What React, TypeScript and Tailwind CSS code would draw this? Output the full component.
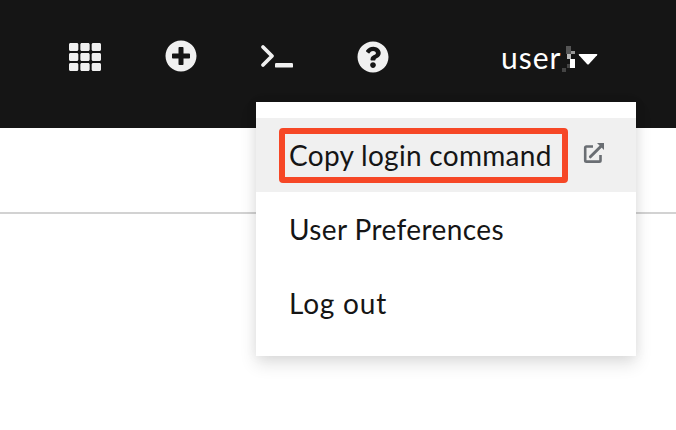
import React from "react";
import { FaTh, FaPlusCircle, FaQuestionCircle } from "react-icons/fa";

function TerminalIcon() {
  return (
    <svg width="34" height="26" viewBox="0 0 34 26" fill="none" stroke="#f0f0f0" strokeLinecap="round">
      <path d="M3 3 12 12 3 21" strokeWidth="3.8" strokeLinejoin="round" />
      <rect x="15" y="19" width="18" height="4.6" rx="1.2" fill="#f0f0f0" stroke="none" />
    </svg>
  );
}

function ExternalLinkIcon() {
  return (
    <svg width="22" height="22" viewBox="0 0 22 22" fill="none" stroke="#6a6e73">
      <path d="M10 4.5H3.4Q2.2 4.5 2.2 5.7V18.4Q2.2 19.6 3.4 19.6H16.3Q17.5 19.6 17.5 18.4V13" strokeWidth="2.6" />
      <path d="M7.4 14.8 18 4.2" strokeWidth="3" strokeLinecap="round" />
      <path d="M14 1H21V8Z" fill="#6a6e73" stroke="none" />
    </svg>
  );
}

export default function App() {
  return (
    <div className="relative h-[430px] w-[676px] overflow-hidden bg-white font-['Lato',sans-serif] text-[28px] leading-[42px] text-[#151515]">
      <header className="flex h-32 items-start bg-[#151515] pt-[35px] text-[#f0f0f0]">
        <FaTh className="mt-[6px] ml-[69px] size-8 shrink-0" />
        <FaPlusCircle className="mt-[5px] ml-16 size-8 shrink-0" />
        <div className="mt-[9px] ml-[63px] shrink-0"><TerminalIcon /></div>
        <FaQuestionCircle className="mt-[6px] ml-[63px] size-8 shrink-0" />
        <div className="ml-[112px] flex items-start text-white">
          <span className="mt-px w-[61px] text-[30px] tracking-[1px]">user</span>
          <svg width="38" height="28" viewBox="562 46 38 28" shapeRendering="crispEdges" className="mt-[11px] shrink-0">
            <path d="M566 46h5v8h-5z" fill="#555" />
            <path d="M571 51h4v3h-4z" fill="#999" />
            <path d="M567 54h4v5h-4z" fill="#bbb" />
            <path d="M570 59h5v9h-5z" fill="#fff" />
            <path d="M567 64h3v4h-3zM562 68h4v4h-4z" fill="#444" />
            <path d="M579.5 54h17q1.5 0 .5 1.2l-8 8.8q-1 1-2 0l-8-8.8q-1-1.2.5-1.2z" fill="#fff" shapeRendering="auto" />
          </svg>
        </div>
      </header>
      <div className="h-[86px] border-b-2 border-[#d2d2d2]" />
      <nav className="absolute top-[102px] left-[256px] h-[254px] w-[380px] bg-white pt-4 shadow-[0_8px_16px_rgba(3,3,3,0.12),0_0_12px_rgba(3,3,3,0.06)]">
        <div className="flex h-[74px] bg-[#f0f0f0] pt-[10px] pl-[23px]">
          <div className="h-[55px] w-[289px] rounded-[4px] border-[6px] border-[#f64726] pl-1 whitespace-nowrap">
            <span className="tracking-[0.3px]">Copy login command</span>
          </div>
          <div className="mt-[14px] ml-[15px]"><ExternalLinkIcon /></div>
        </div>
        <div className="h-[74px] pt-4 pl-[33px] tracking-[0.4px]">User Preferences</div>
        <div className="h-[74px] pt-4 pl-[33px] tracking-[0.8px]">Log out</div>
      </nav>
    </div>
  );
}
